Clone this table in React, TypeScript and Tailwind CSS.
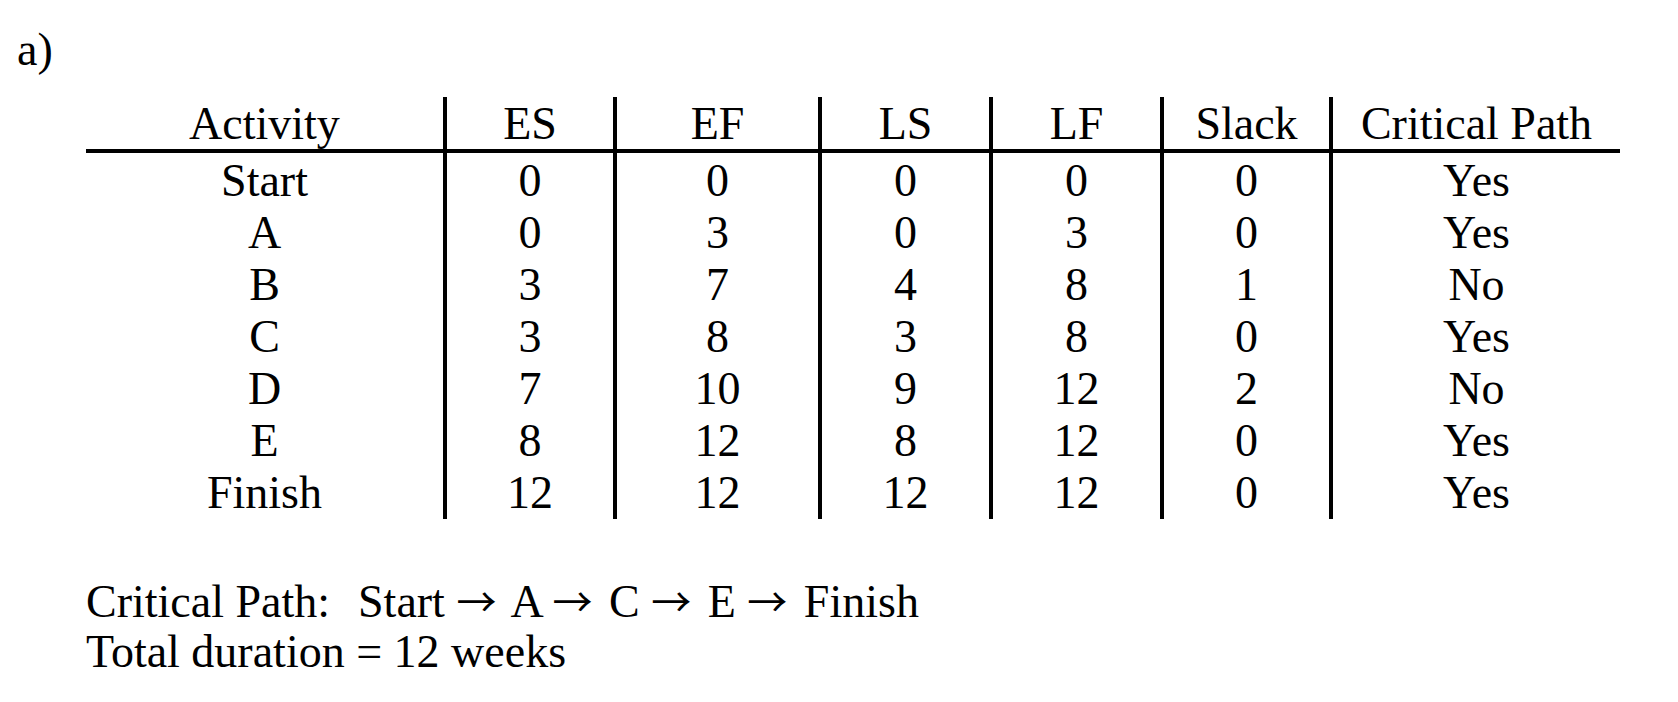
const headers = ["Activity", "ES", "EF", "LS", "LF", "Slack", "Critical Path"];

const rows: string[][] = [
  ["Start", "0", "0", "0", "0", "0", "Yes"],
  ["A", "0", "3", "0", "3", "0", "Yes"],
  ["B", "3", "7", "4", "8", "1", "No"],
  ["C", "3", "8", "3", "8", "0", "Yes"],
  ["D", "7", "10", "9", "12", "2", "No"],
  ["E", "8", "12", "8", "12", "0", "Yes"],
  ["Finish", "12", "12", "12", "12", "0", "Yes"],
];

const path = ["Start", "A", "C", "E", "Finish"];

function Arrow() {
  return (
    <span className="mr-[5px] font-['Noto_Sans_CJK_SC',sans-serif] text-[40px] leading-[0]">→</span>
  );
}

export default function App() {
  return (
    <div className="min-h-screen w-full bg-white text-black font-['Liberation_Serif','Times_New_Roman',serif] text-[46px] leading-[50px]">
      <div className="pl-[17px] pt-[25px]">a)</div>

      <div className="ml-[86px] mt-[22px] grid w-[1534px] grid-cols-[357px_170px_205px_171px_171px_169px_291px]">
        {headers.map((h, i) => (
          <div
            key={h}
            className={`h-[56px] pt-[2px] text-center border-b-4 border-black ${i > 0 ? "border-l-4" : ""}`}
          >
            {h}
          </div>
        ))}
        {rows.map((row, r) =>
          row.map((cell, i) => (
            <div
              key={`${r}-${i}`}
              className={`text-center leading-[52px] border-black ${i > 0 ? "border-l-4" : ""} ${
                r === 0 ? "pt-[2px]" : ""
              }`}
            >
              {cell}
            </div>
          ))
        )}
      </div>

      <div className="ml-[86px] mt-[58px]">
        <div className="whitespace-pre">
          Critical Path:
          <span className="ml-[28px]">
            {path.map((p, i) => (
              <span key={p}>
                {i > 0 && (
                  <>
                    {" "}
                    <Arrow />{" "}
                  </>
                )}
                {p}
              </span>
            ))}
          </span>
        </div>
        <div>Total duration = 12 weeks</div>
      </div>
    </div>
  );
}
